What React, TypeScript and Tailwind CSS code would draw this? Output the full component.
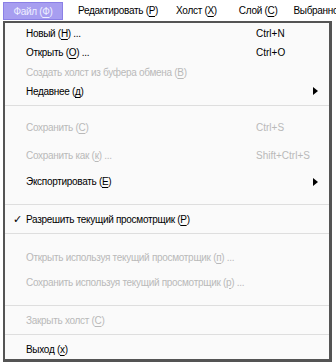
import type { ReactNode } from 'react';

const font = { fontFamily: '"Liberation Sans", Arial, sans-serif' };

function U({ children }: { children: ReactNode }) {
  return <span className="underline underline-offset-2">{children}</span>;
}

interface ItemProps {
  label: ReactNode;
  shortcut?: string;
  disabled?: boolean;
  checked?: boolean;
  submenu?: boolean;
  h: string;
}

function Item({ label, shortcut, disabled, checked, submenu, h }: ItemProps) {
  return (
    <div
      className={`relative flex items-center pl-[21px] whitespace-nowrap ${h} ${
        disabled ? 'text-[#b9b9b9]' : 'text-black'
      }`}
    >
      {checked && <span className="absolute left-[8px] text-[11px]">✓</span>}
      <span className="flex-1 tracking-[-0.3px]">{label}</span>
      {shortcut && <span className="w-[73px]">{shortcut}</span>}
      {submenu && (
        <svg width="5" height="8" viewBox="0 0 5 8" className="mr-[11px]">
          <path d="M0 0 L5 4 L0 8 Z" fill="#000" />
        </svg>
      )}
    </div>
  );
}

function Sep({ cls }: { cls: string }) {
  return (
    <div className={cls}>
      <div className="h-px bg-[#dedede]" />
    </div>
  );
}

export default function App() {
  return (
    <div className="w-[336px] h-[363px] bg-white text-[10px] overflow-hidden" style={font}>
      {/* Полоса меню */}
      <div className="flex items-center h-[21px] text-black whitespace-nowrap tracking-[-0.3px]">
        <div className="shrink-0 ml-[3px] mt-[1px] h-[18px] w-[60px] flex items-center justify-center bg-[#a79ef0] border border-[#8b80e6] text-[#eeeeff]">
          Файл (<U>Ф</U>)
        </div>
        <div className="shrink-0 ml-[15px]">Редактировать (<U>Р</U>)</div>
        <div className="shrink-0 ml-[18px]">Холст (<U>Х</U>)</div>
        <div className="shrink-0 ml-[22px]">Слой (<U>С</U>)</div>
        <div className="shrink-0 ml-[16px]">Выбранное</div>
      </div>

      {/* Выпадающее меню */}
      <div className="ml-[3px] w-[329px] h-[341px] border-2 border-[#545454] border-r-[3px] border-b-[3px] bg-[#fafafa]">
        <Item h="h-[20px]" label={<>Новый (<U>Н</U>) ...</>} shortcut="Ctrl+N" />
        <Item h="h-[19px]" label={<>Открыть (<U>О</U>) ...</>} shortcut="Ctrl+O" />
        <Item h="h-[20px]" disabled label={<>Создать холст из буфера обмена (<U>В</U>)</>} />
        <Item h="h-[18px]" submenu label={<>Недавнее (<U>д</U>)</>} />
        <Sep cls="pt-[5px] pb-[4px]" />
        <Item h="h-[34px]" disabled label={<>Сохранить (<U>С</U>)</>} shortcut="Ctrl+S" />
        <Item h="h-[22px]" disabled label={<>Сохранить как (<U>к</U>) ...</>} shortcut="Shift+Ctrl+S" />
        <Item h="h-[31px]" submenu label={<>Экспортировать (<U>Е</U>)</>} />
        <Sep cls="pt-[7px] pb-[6px]" />
        <Item h="h-[16px]" checked label={<>Разрешить текущий просмотрщик (<U>Р</U>)</>} />
        <Sep cls="pt-[6px] pb-[11px]" />
        <Item h="h-[24px]" disabled label={<>Открыть используя текущий просмотрщик (<U>п</U>) ...</>} />
        <Item h="h-[26px]" disabled label={<>Сохранить используя текущий просмотрщик (<U>р</U>) ...</>} />
        <Sep cls="pt-[10px] pb-[5px]" />
        <Item h="h-[19px]" disabled label={<>Закрыть холст (<U>С</U>)</>} />
        <Sep cls="pt-[4px] pb-[4px]" />
        <Item h="h-[20px]" label={<>Выход (<U>х</U>)</>} />
      </div>
    </div>
  );
}
